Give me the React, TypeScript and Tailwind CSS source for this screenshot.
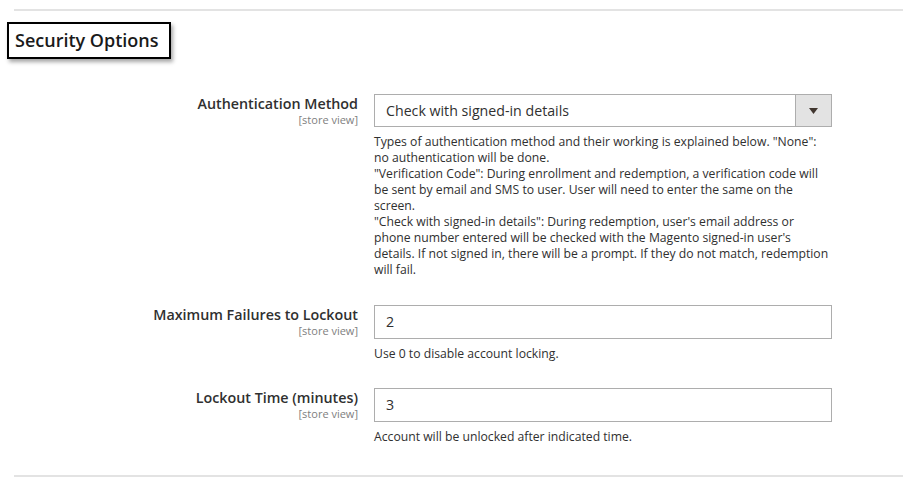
export default function App() {
  const font = { fontFamily: '"Open Sans", "Liberation Sans", sans-serif' };
  return (
    <div className="w-[903px] h-[483px] bg-white text-[#303030] overflow-hidden" style={font}>
      <div className="pt-[9px] ml-[14px]">
        <div className="border-t-2 border-[#e3e3e3]" />
      </div>
      <div className="mt-[11px] ml-[7px]">
        <div className="inline-block border-2 border-black bg-white pl-[6px] pr-[10px] h-[37px] leading-[32px] text-[18px] font-semibold text-[#1a1a1a] shadow-[2px_3px_4px_rgba(0,0,0,0.35)]">
          Security Options
        </div>
      </div>

      <div className="mt-[35px] flex flex-col">
        <Row label="Authentication Method">
          <div className="flex h-[33px] border border-[#adadad]">
            <div className="flex-1 px-[11px] text-[14.2px] leading-[31px] text-[#303030]">
              Check with signed-in details
            </div>
            <div className="w-[36px] border-l border-[#adadad] bg-[#e3e3e3] flex items-center justify-center">
              <svg width="9" height="6" viewBox="0 0 9 6">
                <path d="M0 0 H9 L4.5 6 Z" fill="#41362f" />
              </svg>
            </div>
          </div>
          <p className="mt-[7px] text-[12.2px] leading-[16px]">
            Types of authentication method and their working is explained below. "None": no authentication will be done.
            <br />
            "Verification Code": During enrollment and redemption, a verification code will be sent by email and SMS to user. User will need to enter the same on the screen.
            <br />
            "Check with signed-in details": During redemption, user's email address or phone number entered will be checked with the Magento signed-in user's details. If not signed in, there will be a prompt. If they do not match, redemption will fail.
          </p>
        </Row>

        <div className="mt-[27px]">
          <Row label="Maximum Failures to Lockout">
            <div className="h-[34px] border border-[#adadad] px-[11px] text-[14.2px] leading-[32px]">2</div>
            <p className="mt-[7px] text-[12.2px] leading-[16px]">Use 0 to disable account locking.</p>
          </Row>
        </div>

        <div className="mt-[26px]">
          <Row label="Lockout Time (minutes)">
            <div className="h-[34px] border border-[#adadad] px-[11px] text-[14.2px] leading-[32px]">3</div>
            <p className="mt-[7px] text-[12.2px] leading-[16px]">Account will be unlocked after indicated time.</p>
          </Row>
        </div>
      </div>

      <div className="mt-[30px] ml-[14px]">
        <div className="border-t-2 border-[#e3e3e3]" />
      </div>
    </div>
  );
}

function Row({ label, children }: { label: string; children: React.ReactNode }) {
  return (
    <div className="flex">
      <div className="w-[359px] pr-[1px] text-right pt-[1px]">
        <div className="text-[14.3px] font-semibold leading-[18px] text-[#303030]">{label}</div>
        <div className="text-[11px] leading-[14px] text-[#808080]">[store view]</div>
      </div>
      <div className="ml-[15px] w-[458px]">{children}</div>
    </div>
  );
}
